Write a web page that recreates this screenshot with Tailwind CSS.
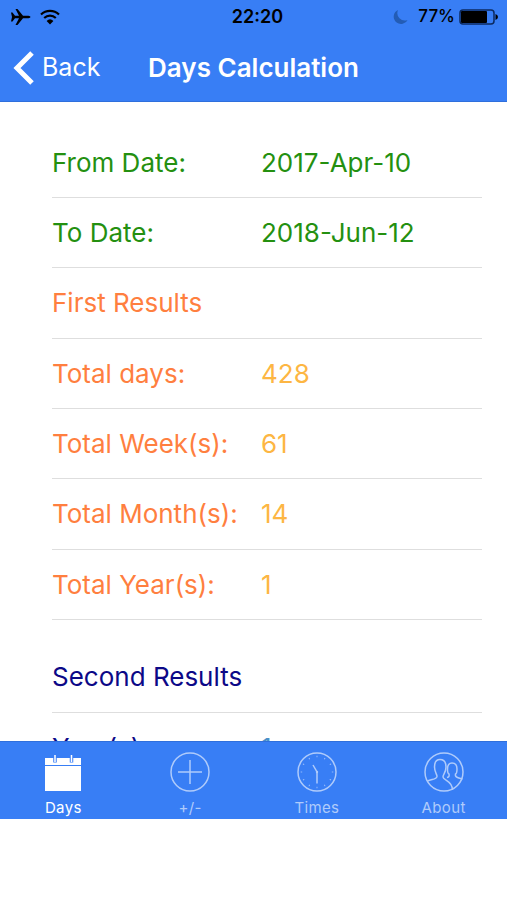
<!DOCTYPE html>
<html lang="en">
<head>
    <meta charset="UTF-8">
    <meta name="viewport" content="width=device-width, initial-scale=1.0">
    <title>Days Calculation</title>
    <script src="https://cdn.jsdelivr.net/npm/@tailwindcss/browser@4"></script>
</head>
<body class="bg-white font-['Inter',sans-serif]">
    <div class="h-screen flex flex-col pb-[81px]">
        <header class="bg-[#387ef5] border-b border-[#2f6fdc]">
            <!-- Status bar -->
            <div class="h-[34px] px-2 grid grid-cols-3 items-center text-black">
                <div class="flex items-center gap-2">
                    <svg class="w-6 h-5" viewBox="0 0 24 20" aria-label="Airplane mode">
                        <path d="M3 5.5h1.5L7 8.7h4L7.500 2H9.500L15 8.700h5.500q2 .3 2 1.300t-2 1.300H15L9.500 18H7.500L11 11.300H7L4.500 14.500H3L4 10Z"/>
                    </svg>
                    <svg class="w-5 h-4" viewBox="0 0 20 16" fill="none" stroke="black" stroke-width="2.200" aria-label="Wi-Fi">
                        <path d="M1 5.500a13 13 0 0 1 18 0M4.200 9a8.500 8.500 0 0 1 11.600 0"/>
                        <path d="M10 15.500l-3.400-3.600a5 5 0 0 1 6.800 0Z" fill="black" stroke="none"/>
                    </svg>
                </div>
                <p class="pl-2 text-center text-lg font-semibold">22:20</p>
                <div class="flex items-center justify-end">
                    <svg class="w-4 h-4 mr-2.5" viewBox="0 0 16 16" fill="#235cb5" aria-label="Do not disturb">
                        <path d="M6 1A7.300 7.300 0 1 0 15.500 11 7.500 7.500 0 0 1 6 1Z"/>
                    </svg>
                    <span class="text-[17px] font-medium">77%</span>
                    <svg class="w-10 h-4 ml-1" viewBox="0 0 40 16" aria-label="Battery">
                        <rect x="1" y="1" width="34" height="14" rx="3" fill="none" stroke="#0b2a60" stroke-width="1.500"/>
                        <rect x="2" y="2" width="26" height="12" rx="1"/>
                        <path d="M36.500 5q2.500 1 2.500 3t-2.500 3Z"/>
                    </svg>
                </div>
            </div>
            <!-- Title bar -->
            <div class="h-[67px] px-3 grid grid-cols-[1fr_auto_1fr] items-center text-white">
                <button type="button" class="flex items-center gap-2 text-[25px]">
                    <svg class="w-[22px] h-9" viewBox="0 0 22 36" fill="none" stroke="white" stroke-width="5">
                        <path d="M20 3L5 18l15 15"/>
                    </svg>
                    Back
                </button>
                <h1 class="text-[26px] font-semibold">Days Calculation</h1>
            </div>
        </header>

        <main class="flex-1 min-h-0 overflow-hidden pl-[52px] pr-[25px] pt-[26px] text-[26px]">
            <table class="w-full h-[492px] table-fixed border-collapse text-left">
                <colgroup>
                    <col class="w-[209px]">
                    <col>
                </colgroup>
                <tbody class="text-[#249010]">
                    <tr class="border-b border-[#dedede]"><th class="font-normal">From Date:</th><td>2017-Apr-10</td></tr>
                    <tr class="border-b border-[#dedede]"><th class="font-normal">To Date:</th><td>2018-Jun-12</td></tr>
                </tbody>
                <tbody class="text-[#ff7f3f]">
                    <tr class="border-b border-[#dedede]"><th colspan="2" class="font-normal">First Results</th></tr>
                    <tr class="border-b border-[#dedede]"><th class="font-normal">Total days:</th><td class="text-[#fdb643]">428</td></tr>
                    <tr class="border-b border-[#dedede]"><th class="font-normal">Total Week(s):</th><td class="text-[#fdb643]">61</td></tr>
                    <tr class="border-b border-[#dedede]"><th class="font-normal">Total Month(s):</th><td class="text-[#fdb643]">14</td></tr>
                    <tr class="border-b border-[#dedede]"><th class="font-normal">Total Year(s):</th><td class="text-[#fdb643]">1</td></tr>
                </tbody>
            </table>
            <table class="w-full mt-[22px] table-fixed border-collapse text-left text-[#0c0887]">
                <colgroup>
                    <col class="w-[209px]">
                    <col>
                </colgroup>
                <tbody>
                    <tr class="h-[70px] border-b border-[#dedede]"><th colspan="2" class="font-normal">Second Results</th></tr>
                    <tr class="h-[70px] border-b border-[#dedede]"><th class="font-normal">Year(s):</th><td class="text-[#4a90c8]">1</td></tr>
                </tbody>
            </table>
        </main>

        <nav class="h-[78px] shrink-0 grid grid-cols-4 bg-[#387ef5] border-t border-[#2f6fdc] text-[15px] leading-5 tracking-wide text-[#afcbfb]">
            <a href="#days" class="flex flex-col items-center pt-2 gap-1 text-white">
                <svg class="w-11 h-11" viewBox="0 0 44 44">
                    <path d="M4 8h36v33H4Z" fill="white"/>
                    <path d="M4 15.500h36" stroke="#387ef5"/>
                    <path d="M14 5v7.500M30.500 5v7.500" stroke="#387ef5" stroke-width="3.500"/>
                    <path d="M14 5v7M30.500 5v7" stroke="white" stroke-width="1.500"/>
                </svg>
                Days
            </a>
            <a href="#plus-minus" class="flex flex-col items-center pt-2 gap-1">
                <svg class="w-11 h-11" viewBox="0 0 44 44" fill="none" stroke="currentColor" stroke-width="1.500">
                    <circle cx="22" cy="22" r="19"/>
                    <path d="M22 10v24M10 22h24"/>
                </svg>
                +/-
            </a>
            <a href="#times" class="flex flex-col items-center pt-2 gap-1">
                <svg class="w-11 h-11" viewBox="0 0 44 44" fill="none" stroke="currentColor" stroke-width="1.500">
                    <circle cx="22" cy="22" r="19"/>
                    <path d="M22 33.500V22l-4-7"/>
                    <circle cx="22" cy="22" r="1.200" fill="currentColor" stroke="none"/>
                    <circle cx="22" cy="22" r="15.500" pathLength="120" stroke-dasharray="1 9" stroke-dashoffset=".5"/>
                </svg>
                Times
            </a>
            <a href="#about" class="flex flex-col items-center pt-2 gap-1">
                <svg class="w-11 h-11" viewBox="0 0 44 44" fill="none" stroke="currentColor" stroke-width="1.500">
                    <circle cx="22" cy="22" r="19"/>
                    <path d="M5.500 31c5-2 9-1.500 9.500-4.500 .3-2-2.500-4-2.500-9.500 0-5 2-7.500 5.500-7.500s6 2.500 6 7.500c0 5.500-3 7.500-3 10 0 3.500 9.500 3.500 9.500 13"/>
                    <path d="M25 27.500c2-.5 2.500-1.500 2-3.500-1.500-.5-1.500-3-1.500-5 0-4 1.500-6 4.500-6s5 2 5 6c0 2 0 4.500-1.500 5-.5 2 .5 3 2 3.500 1.500 .8 3.500 1 5 1.500"/>
                </svg>
                About
            </a>
        </nav>
    </div>
</body>
</html>
